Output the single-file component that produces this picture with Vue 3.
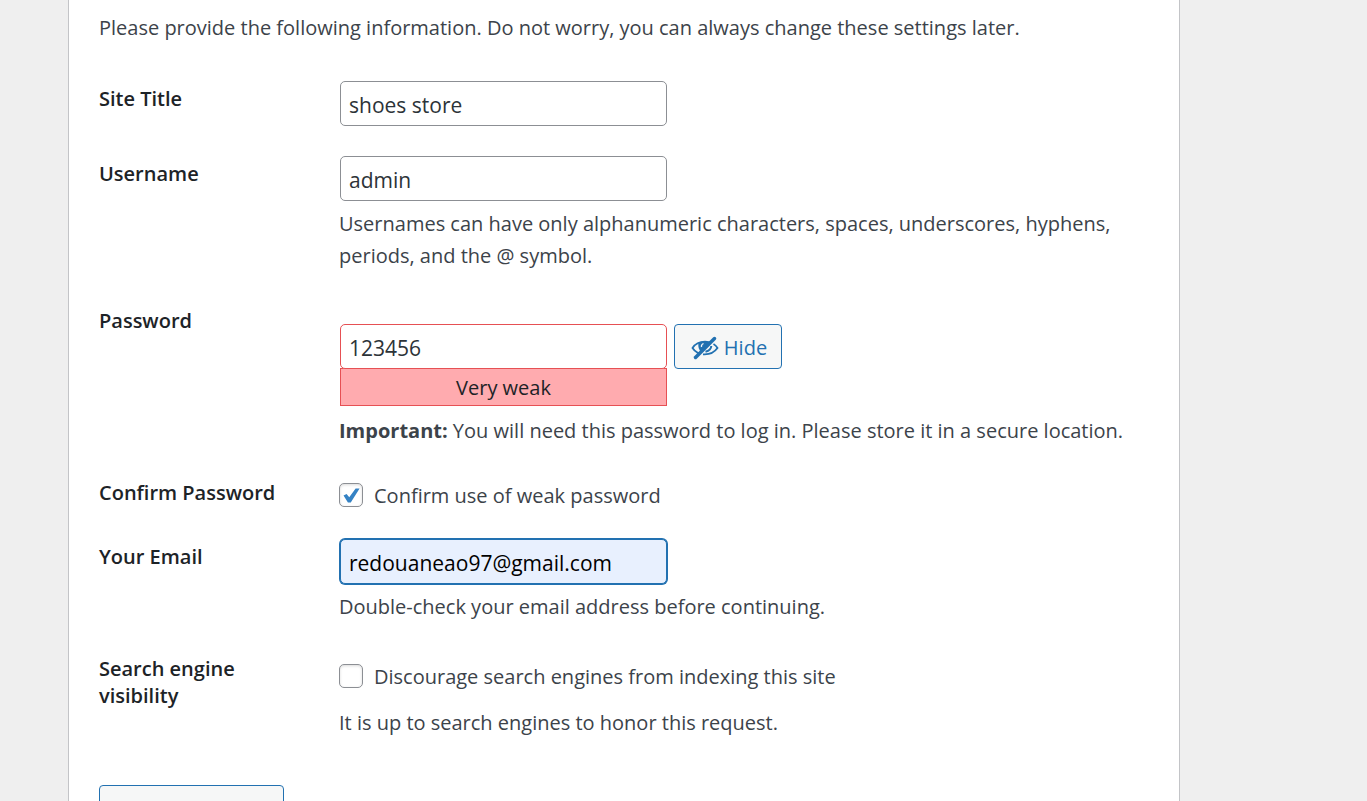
<script setup>
import { ref } from 'vue'

const title = ref('shoes store')
const username = ref('admin')
const password = ref('123456')
const email = ref('redouaneao97@gmail.com')
const confirmWeak = ref(true)
const discourage = ref(false)
</script>

<template>
  <div class="page">
    <main class="panel">
      <p class="intro">Please provide the following information. Do not worry, you can always change these settings later.</p>
      <form @submit.prevent>
        <div class="row">
          <label class="name" for="title">Site Title</label>
          <div class="field">
            <input id="title" v-model="title" class="text" type="text">
          </div>
        </div>
        <div class="row">
          <label class="name" for="user">Username</label>
          <div class="field">
            <input id="user" v-model="username" class="text" type="text">
            <p class="hint">Usernames can have only alphanumeric characters, spaces, underscores, hyphens, periods, and the @ symbol.</p>
          </div>
        </div>
        <div class="row">
          <label class="name" for="pass">Password</label>
          <div class="field secret">
            <div class="pass-line">
              <input id="pass" v-model="password" class="text weak" type="text">
              <button class="button" type="button">
                <svg class="eye" viewBox="0 0 28 24" aria-hidden="true">
                  <path d="M1.5 12C7 3.500 21 3.500 26.500 12C21 20.500 7 20.500 1.500 12Z" fill="none" stroke="currentColor" stroke-width="1.800" />
                  <path d="M7.500 6.500C6.500 12 9 17 13.500 17C18 17 20 12 18.500 6.500C15 5 11 5 7.500 6.500Z" fill="currentColor" />
                  <path d="M12.500 7.500Q10 8.500 10.500 11" fill="none" stroke="#f6f7f7" stroke-width="1.300" />
                  <path d="M9 23L7 20.500L24 3L28 4V23Z" fill="#f6f7f7" />
                  <path d="M22.500 8Q25 9.500 26.500 12Q21.500 19 12 18.300" fill="none" stroke="currentColor" stroke-width="1.800" />
                  <path d="M20.300 10Q20 14.300 14.500 15.800" fill="none" stroke="currentColor" stroke-width="2" />
                  <path d="M4.500 21.500L23.500 2.500" stroke="currentColor" stroke-width="3.500" stroke-linecap="round" />
                </svg>
                <span>Hide</span>
              </button>
            </div>
            <div class="strength" role="status">Very weak</div>
            <p class="hint"><strong>Important:</strong> You will need this password to log in. Please store it in a secure location.</p>
          </div>
        </div>
        <div class="row">
          <span class="name">Confirm Password</span>
          <div class="field checks">
            <label class="check"><input v-model="confirmWeak" type="checkbox">Confirm use of weak password</label>
          </div>
        </div>
        <div class="row">
          <label class="name" for="email">Your Email</label>
          <div class="field contact">
            <input id="email" v-model="email" class="text active" type="email">
            <p class="hint">Double-check your email address before continuing.</p>
          </div>
        </div>
        <div class="row">
          <span class="name">Search engine visibility</span>
          <div class="field visibility">
            <label class="check"><input v-model="discourage" type="checkbox">Discourage search engines from indexing this site</label>
            <p class="hint">It is up to search engines to honor this request.</p>
          </div>
        </div>
        <button class="button submit" type="submit" aria-label="Submit"></button>
      </form>
    </main>
  </div>
</template>

<style>
body { background: #efefef; }
</style>

<style scoped>
* { box-sizing: border-box; }
.page {
  height: 100vh;
  overflow: hidden;
  font-family: "Open Sans", "Noto Sans", sans-serif;
  font-size: 20px;
  line-height: 32px;
  color: #3c434a;
}
.panel {
  margin: 0 187px 0 68px;
  padding: 12px 29px 30px 30px;
  background: #fff;
  border: 1px solid #c3c4c7;
  border-top: 0;
  border-bottom: 0;
}
.intro { margin: 0 0 22px; }
.row {
  display: grid;
  grid-template-columns: 240px 1fr;
}
.name {
  padding: 19px 60px 18px 0;
  font-weight: 600;
  line-height: 27px;
  color: #1d2327;
}
.field { padding: 15px 0; }
.text {
  display: block;
  width: 327px;
  height: 45px;
  margin: 0 1px;
  padding: 2px 8px 0;
  border: 1px solid #8c8f94;
  border-radius: 5px;
  background: #fff;
  color: #2c3338;
  font: inherit;
  font-size: 21px;
  outline: none;
}
.hint { margin: 7px 0 1px; }
.secret { padding: 36px 0 13px; }
.secret .hint { margin: 0; }
.pass-line { display: flex; gap: 6px; }
.weak { border-color: #e65054; }
.button {
  display: flex;
  align-items: center;
  justify-content: center;
  gap: 5px;
  width: 108px;
  height: 45px;
  padding: 2px 0 0 2px;
  border: 1px solid #2271b1;
  border-radius: 4px;
  background: #f6f7f7;
  color: #2271b1;
  font: inherit;
}
.eye { width: 28px; height: 24px; }
.strength {
  width: 327px;
  height: 38px;
  margin: -1px 1px 9px;
  padding-top: 3px;
  border: 1px solid #e65054;
  background: #ffabaf;
  color: #1d2327;
  text-align: center;
}
.checks { padding: 20px 0 12px; }
.check {
  display: flex;
  align-items: center;
  gap: 11px;
}
.check input {
  appearance: none;
  width: 24px;
  height: 24px;
  margin: 0 0 2px;
  border: 1px solid #8c8f94;
  border-radius: 5px;
  background: #fff;
  box-shadow: inset 0 1px 3px rgba(0, 0, 0, 0.15);
}
.check input:checked::before {
  content: "";
  display: block;
  width: 22px;
  height: 22px;
  background: #3582c4;
  clip-path: polygon(16% 52%, 30% 45%, 42% 60%, 71% 20%, 89% 20%, 49% 84%, 36% 84%);
}
.contact { padding-bottom: 12px; }
.active {
  border-color: #2271b1;
  box-shadow: 0 0 0 1px #2271b1;
  background: #e8f0fe;
  color: #000;
}
.visibility { padding-top: 25px; }
.visibility .hint { margin-top: 14px; }
.submit { width: 185px; margin-top: 30px; }
</style>
